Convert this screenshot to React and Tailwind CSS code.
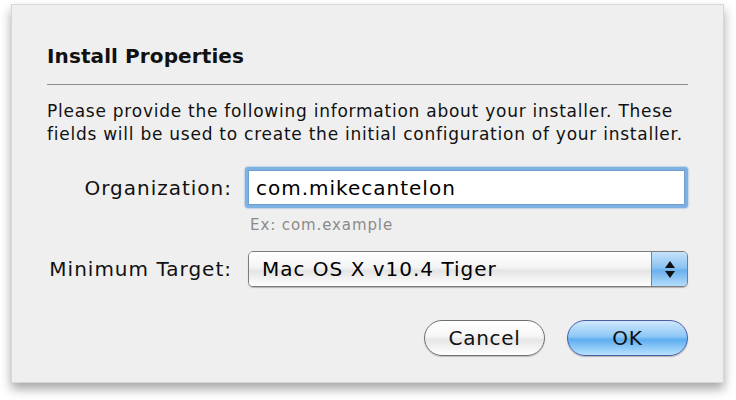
export default function App() {
  const font = { fontFamily: '"DejaVu Sans", Verdana, sans-serif' }
  return (
    <div className="w-[736px] h-[400px] bg-white pt-[4px] pl-[11px]" style={font}>
      <div className="w-[713px] h-[379px] bg-[#efefef] border border-[#d6d6d6] shadow-[0_6px_10px_rgba(0,0,0,0.35)] px-[35px] pt-[39px]">
        <div className="text-[20px] font-bold text-[#111] leading-[24px] tracking-[0.1px]">Install Properties</div>
        <div className="mt-[16px] h-px bg-[#8e8e8e]"></div>
        <p className="mt-[15px] text-[17px] leading-[23px] text-[#111] tracking-[0.75px] whitespace-nowrap">
          Please provide the following information about your installer. These
          <br />
          fields will be used to create the initial configuration of your installer.
        </p>

        <div className="mt-[21px] grid grid-cols-[185px_1fr] gap-x-[13px] items-center">
          <div className="text-right text-[20px] tracking-[1px] text-[#111] whitespace-nowrap">Organization:</div>
          <div className="h-[41px] rounded-[3px] border-[3px] border-[#7fb0e2] shadow-[0_0_2px_#5f9ad6]">
            <div className="h-full bg-white border border-[#6f9fd2] flex items-center pl-[7px] text-[20px] tracking-[1px] text-black">
              com.mikecantelon
            </div>
          </div>
          <div></div>
          <div className="pl-[5px] pt-[7px] text-[15px] leading-[20px] tracking-[0.9px] text-[#8b8b8b]">Ex: com.example</div>
        </div>

        <div className="mt-[16px] grid grid-cols-[185px_1fr] gap-x-[16px] items-center">
          <div className="text-right text-[20px] tracking-[1px] text-[#111] whitespace-nowrap">Minimum Target:</div>
          <div className="h-[36px] rounded-[5px] border border-[#7c7c7c] flex overflow-hidden shadow-[0_1px_1px_rgba(0,0,0,0.25)]">
            <div className="flex-1 flex items-center pl-[13px] text-[20px] tracking-[1px] text-black bg-[linear-gradient(#ffffff_0%,#f4f4f4_45%,#e4e4e4_55%,#ffffff_100%)]">
              Mac OS X v10.4 Tiger
            </div>
            <div className="w-[36px] border-l border-[#6b7fb8] bg-[linear-gradient(#c6e2fb_0%,#8cc3f3_45%,#6bb0ee_55%,#b4ddfb_100%)] flex flex-col items-center justify-center gap-[3px]">
              <svg width="10" height="7" viewBox="0 0 10 7"><path d="M5 0 L10 7 L0 7 Z" fill="#111" /></svg>
              <svg width="10" height="7" viewBox="0 0 10 7"><path d="M0 0 L10 0 L5 7 Z" fill="#111" /></svg>
            </div>
          </div>
        </div>

        <div className="mt-[33px] flex justify-end gap-[22px]">
          <button className="w-[121px] h-[36px] rounded-full border border-[#6f6f6f] text-[20px] tracking-[0.7px] text-[#111] bg-[linear-gradient(#ffffff_0%,#f6f6f6_45%,#e6e6e6_55%,#ffffff_100%)] shadow-[0_1px_1px_rgba(0,0,0,0.2)]" style={font}>
            Cancel
          </button>
          <button className="w-[121px] h-[36px] rounded-full border border-[#4c5da8] text-[20px] tracking-[0.7px] text-[#111] bg-[linear-gradient(#cfe8fd_0%,#8ec8f6_45%,#5eaef0_55%,#b8e2fd_100%)] shadow-[0_1px_1px_rgba(0,0,0,0.25)]" style={font}>
            OK
          </button>
        </div>
      </div>
    </div>
  )
}
